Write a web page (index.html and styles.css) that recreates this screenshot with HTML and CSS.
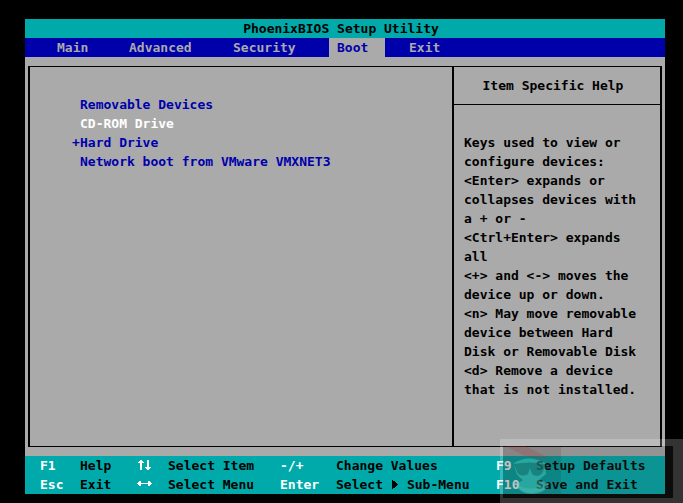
FILE: index.html
```html
<!DOCTYPE html>
<html lang="en">
<head>
<meta charset="utf-8">
<title>PhoenixBIOS Setup Utility</title>
<link rel="stylesheet" href="styles.css">
</head>
<body>
<div class="screen">
  <h1 class="title">PhoenixBIOS Setup Utility</h1>
  <nav class="tabs">
    <a class="tab" href="#main">Main</a>
    <a class="tab" href="#advanced">Advanced</a>
    <a class="tab" href="#security">Security</a>
    <a class="tab active" href="#boot" aria-current="page">Boot</a>
    <a class="tab" href="#exit">Exit</a>
  </nav>
  <main class="panels">
    <ul class="devices">
      <li>Removable Devices</li>
      <li class="selected">CD-ROM Drive</li>
      <li><span class="mark">+</span>Hard Drive</li>
      <li>Network boot from VMware VMXNET3</li>
    </ul>
    <aside class="help">
      <h2 class="help-title">Item Specific Help</h2>
      <p class="help-text">Keys used to view or<br>configure devices:<br>&lt;Enter&gt; expands or<br>collapses devices with<br>a + or -<br>&lt;Ctrl+Enter&gt; expands<br>all<br>&lt;+&gt; and &lt;-&gt; moves the<br>device up or down.<br>&lt;n&gt; May move removable<br>device between Hard<br>Disk or Removable Disk<br>&lt;d&gt; Remove a device<br>that is not installed.</p>
    </aside>
  </main>
  <footer class="keys">
    <b>F1</b><span>Help</span>
    <b><svg class="arrows" viewBox="0 0 16 19" role="img" aria-label="Up and down"><path d="M4 4h2v1h1v1h1v1H6v7H4V7H2V6h1V5h1zM11 4h2v7h2v1h-1v1h-1v1h-2v-1h-1v-1H9v-1h2z"/></svg></b><span>Select Item</span>
    <b>-/+</b><span>Change Values</span>
    <b>F9</b><span>Setup Defaults</span>
    <b>Esc</b><span>Exit</span>
    <b><svg class="arrows" viewBox="0 0 16 19" role="img" aria-label="Left and right"><path d="M1 8h1V7h1V6h2v2h2v1H5v2H3v-1H2V9H1zM16 8h-1V7h-1V6h-2v2H9v1h3v2h2v-1h1V9h1zM7 8h2v1H7z"/></svg></b><span>Select Menu</span>
    <b>Enter</b><span class="sub">Select <svg class="pointer" viewBox="0 0 8 19" role="img" aria-label="right"><path d="M1 5h1v1h2v1h1v1h1v1h1v1H6v1H5v1H4v1H2v1H1z"/></svg> Sub-Menu</span>
    <b>F10</b><span>Save and Exit</span>
  </footer>
</div>
<div class="watermark">
  <svg class="mascot" viewBox="0 0 58 52" aria-hidden="true">
    <path class="cape" d="M0 0h58v52H0z"/>
    <path class="stripe" d="M2 0h20l26 13H36L22 10z"/>
    <path class="face" d="M11 17Q26 8 42 17L43 28Q38 32 36 34Q42 36 46 37Q43 48 28 48Q16 48 12 37Q18 36 20 34Q12 30 11 17z"/>
    <path class="lens" d="M11 18Q26 15 42 18L40 26Q35 33 29 28L27 22L25 28Q18 32 14 26z"/>
    <path class="muzzle" d="M14 39Q28 46 43 39Q40 47 28 47Q18 47 14 39z"/>
  </svg>
</div>
</body>
</html>
```
FILE: styles.css
```css
* { box-sizing: border-box; }
body {
  margin: 0;
  min-height: 100vh;
  padding: 19px 18px 9px 25px;
  background: #000;
  color: #000;
  font: bold 13px/19px "DejaVu Sans Mono", "Liberation Mono", monospace;
}
h1, h2, p, ul { margin: 0; padding: 0; font: inherit; }
.screen { background: #aaa; }
.title { background: #00aaaa; text-align: center; padding-right: 8px; }
.tabs {
  display: grid;
  grid-template-columns: 72px 104px 104px 56px auto;
  justify-content: start;
  padding-left: 24px;
  background: #0000aa;
}
.tab { color: #aaa; padding: 0 8px; text-decoration: none; }
.tab:last-child { padding-left: 24px; }
.active { background: #aaa; color: #0000aa; }
.panels {
  display: grid;
  grid-template-columns: 1fr 208px;
  margin: 9px 3px;
  min-height: 381px;
  border: solid #000;
  border-width: 1px 2px;
}
.devices { list-style: none; padding: 28px 0 0 50px; color: #0000aa; }
.selected { color: #fff; }
.mark { display: inline-block; width: 8px; margin-left: -8px; }
.help { border-left: 2px solid #000; }
.help-title { text-align: center; padding: 9px 8px 9px 0; border-bottom: 1px solid #000; }
.help-text { padding: 28px 0 0 10px; white-space: nowrap; }
.keys {
  display: grid;
  grid-template-columns: 40px 56px 32px 112px 56px 160px 40px 1fr;
  padding-left: 15px;
  background: #00aaaa;
  white-space: nowrap;
}
.keys b { color: #fff; }
.arrows, .pointer { display: block; height: 19px; fill: currentColor; }
.arrows { width: 16px; }
.pointer { width: 8px; }
.sub { display: flex; gap: 8px; }
.watermark {
  position: absolute;
  right: 0;
  bottom: 0;
  width: 183px;
  height: 64px;
  border: solid rgba(255, 255, 255, .2);
  border-width: 7px 10px 5px 3px;
  background: rgba(60, 60, 60, .2);
  background-clip: padding-box;
}
.mascot { display: block; width: 58px; height: 52px; }
.cape { fill: rgba(40, 10, 10, .1); }
.stripe { fill: rgba(170, 50, 50, .2); }
.face { fill: rgba(90, 230, 210, .35); }
.lens { fill: rgba(0, 80, 80, .4); }
.muzzle { fill: rgba(120, 225, 210, .2); }
```
